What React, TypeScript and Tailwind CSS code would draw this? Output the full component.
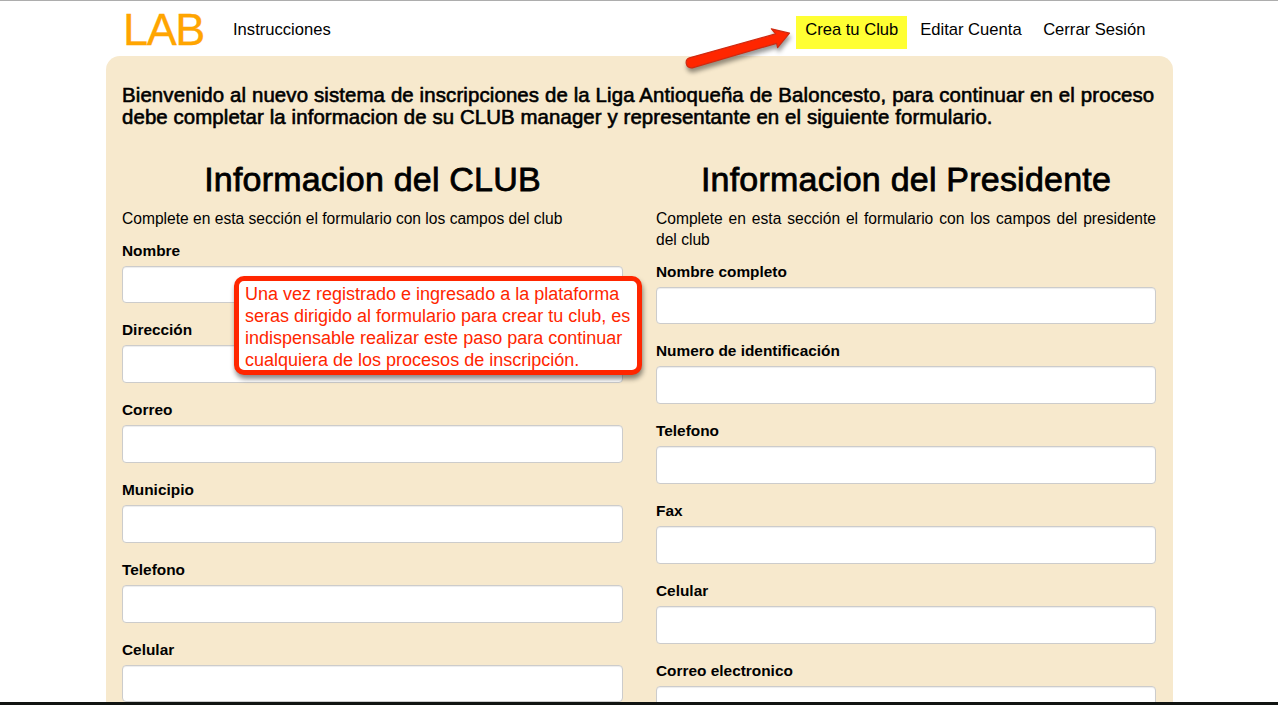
const clubFields = ["Nombre", "Dirección", "Correo", "Municipio", "Telefono", "Celular"];
const presidentFields = [
  "Nombre completo",
  "Numero de identificación",
  "Telefono",
  "Fax",
  "Celular",
  "Correo electronico",
];

function Field({ label }: { label: string }) {
  return (
    <label className="mb-4 block">
      <span className="mb-[5px] block text-[15.4px] leading-[21px] font-bold">{label}</span>
      <input
        type="text"
        className="block h-[37.8px] w-full rounded-[4px] border border-[#ccc] bg-white px-3 shadow-[inset_0_1px_1px_rgba(0,0,0,0.075)] outline-none"
      />
    </label>
  );
}

function Header() {
  return (
    <header className="flex h-[55px] shrink-0 items-start pl-[123px] text-[16.6px] leading-[22px]">
      <div className="w-[110px] pt-px text-[45px] leading-[56px] tracking-[-1.4px] text-[#ffa500] [-webkit-text-stroke:0.3px_#ffa500]">
        LAB
      </div>
      <span className="mt-[18px] whitespace-nowrap">Instrucciones</span>
      <nav className="mt-[15px] mr-[132.5px] ml-auto flex">
        <span className="mr-[13px] h-[33px] w-[111px] bg-[#ffff33] pt-[3px] pl-[9px] whitespace-nowrap">
          Crea tu Club
        </span>
        <span className="mr-[21.5px] pt-[3px] whitespace-nowrap">Editar Cuenta</span>
        <span className="pt-[3px] whitespace-nowrap">Cerrar Sesión</span>
      </nav>
    </header>
  );
}

function Arrow() {
  return (
    <svg
      className="absolute top-[19px] left-[680px] overflow-visible drop-shadow-[1px_4px_2px_rgba(0,0,0,0.4)]"
      width="114"
      height="52"
      viewBox="680 20 114 52"
    >
      <path
        d="M689.5 57.8 L775.6 33.9 L771.4 28.8 L789.5 33.2 L777.6 47.6 L776.6 43.3 L692.3 67.8 C685.7 68.7 684 60 689.5 57.8 Z"
        fill="#ff2600"
        stroke="#cf2a10"
        strokeWidth="1.2"
        strokeLinejoin="round"
      />
    </svg>
  );
}

function Callout() {
  return (
    <div className="absolute top-[275px] left-[233.5px] h-[99px] w-[408px] rounded-[10px] border-[5px] border-[#ff2600] bg-white pt-[2px] pl-[6.5px] text-[18px] leading-[22px] text-[#ff2600] shadow-[1px_4px_5px_rgba(0,0,0,0.45)]">
      <p className="whitespace-nowrap">Una vez registrado e ingresado a la plataforma</p>
      <p className="whitespace-nowrap">seras dirigido al formulario para crear tu club, es</p>
      <p className="whitespace-nowrap">indispensable realizar este paso para continuar</p>
      <p className="whitespace-nowrap">cualquiera de los procesos de inscripción.</p>
    </div>
  );
}

export default function App() {
  return (
    <div className="relative flex h-[705px] w-[1278px] flex-col overflow-hidden border-t border-[#adadad] bg-white font-['Liberation_Sans',Arial,sans-serif] text-black">
      <Header />
      <main className="ml-[106px] min-h-0 w-[1067px] flex-1 overflow-hidden rounded-t-[14px] bg-[#f7e9cd] px-4 pt-[28px]">
        <div className="text-[20.4px] leading-[22px] [-webkit-text-stroke:0.6px_black]">
          <p className="tracking-[0.13px] whitespace-nowrap">
            Bienvenido al nuevo sistema de inscripciones de la Liga Antioqueña de Baloncesto, para continuar en el proceso
          </p>
          <p className="tracking-[0.1px] whitespace-nowrap">
            debe completar la informacion de su CLUB manager y representante en el siguiente formulario.
          </p>
        </div>
        <div className="mt-[31px] grid grid-cols-[501px_500px] gap-x-[33px]">
          <section>
            <h1 className="text-center text-[34px] leading-[40px] tracking-[0.2px] whitespace-nowrap [-webkit-text-stroke:0.8px_black]">
              Informacion del CLUB
            </h1>
            <p className="mt-[9px] mb-[10.6px] text-[15.6px] leading-[21px]">
              Complete en esta sección el formulario con los campos del club
            </p>
            {clubFields.map((f) => (
              <Field key={f} label={f} />
            ))}
          </section>
          <section>
            <h1 className="text-center text-[34px] leading-[40px] tracking-[0.22px] whitespace-nowrap [-webkit-text-stroke:0.8px_black]">
              Informacion del Presidente
            </h1>
            <p className="mt-[9px] mb-[10.6px] text-justify text-[15.6px] leading-[21px]">
              Complete en esta sección el formulario con los campos del presidente del&nbsp;club
            </p>
            {presidentFields.map((f) => (
              <Field key={f} label={f} />
            ))}
          </section>
        </div>
      </main>
      <footer className="h-[3px] shrink-0 bg-[#111412]" />
      <Arrow />
      <Callout />
    </div>
  );
}
